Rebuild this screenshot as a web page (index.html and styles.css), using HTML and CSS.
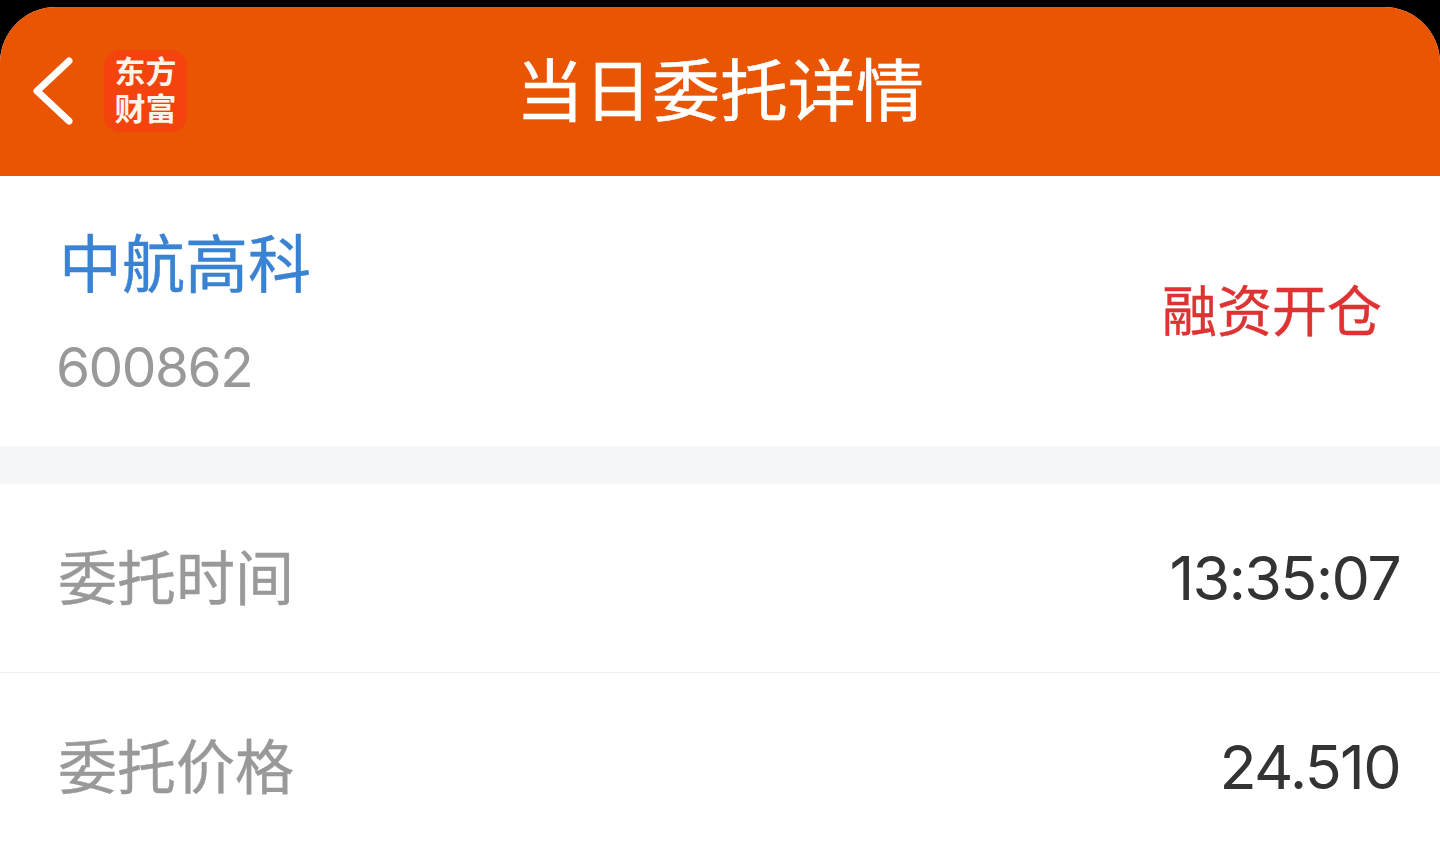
FILE: index.html
```html
<!DOCTYPE html>
<html lang="zh-CN">
<head>
  <meta charset="UTF-8" />
  <meta name="viewport" content="width=device-width, initial-scale=1.0" />
  <title>当日委托详情</title>
  <link rel="stylesheet" href="styles.css">
</head>
<body>
  <div class="screen">
    <div class="header">
      <div class="header-left">
        <svg class="back-icon" width="42" height="70" viewBox="0 0 42 70">
          <path d="M37 5 L5 35 L37 65" fill="none" stroke="#fff" stroke-width="7" stroke-linecap="round" stroke-linejoin="round" />
        </svg>
        <div class="logo">
          <span class="logo-line">东方</span>
          <span class="logo-line">财富</span>
        </div>
      </div>
      <div class="title">当日委托详情</div>
    </div>

    <div class="stock">
      <div>
        <div class="stock-name">中航高科</div>
        <div class="stock-code">600862</div>
      </div>
      <div class="trade-type">融资开仓</div>
    </div>

    <div class="gap"></div>

    <div class="row">
      <span class="row-label">委托时间</span>
      <span class="row-value">13:35:07</span>
    </div>
    <div class="row">
      <span class="row-label">委托价格</span>
      <span class="row-value">24.510</span>
    </div>
  </div>
</body>
</html>
```

FILE: styles.css
```css
html, body {
  margin: 0;
  padding: 0;
  height: 858px;
  overflow: hidden;
  background: #000;
}
body {
  font-family: Inter, "Noto Sans CJK SC", sans-serif;
  color: #333;
}
.screen {
  margin-top: 7px;
  height: 851px;
  background: #fff;
  border-radius: 56px 56px 0 0;
  overflow: hidden;
}
.header {
  height: 169px;
  background: #ea5504;
  color: #fff;
  display: flex;
  align-items: center;
  justify-content: center;
  position: relative;
}
.header-left {
  position: absolute;
  left: 32px;
  top: 43px;
  display: flex;
  align-items: center;
  gap: 30px;
}
.logo {
  width: 83px;
  height: 82px;
  box-sizing: border-box;
  padding-bottom: 6px;
  background: #f4430c;
  border-radius: 16px;
  font-family: "Noto Sans CJK SC", serif;
  font-size: 31px;
  line-height: 37px;
  font-weight: 700;
  text-align: center;
  display: flex;
  flex-direction: column;
  justify-content: center;
}
.logo-line {
  display: block;
  color: #fff3ea;
}
.title {
  font-family: "Noto Sans CJK SC", sans-serif;
  font-size: 68px;
  line-height: 90px;
  margin-top: -10px;
  -webkit-text-stroke: 0.5px #fff;
}
.stock {
  height: 270px;
  padding: 0 58px;
  display: flex;
  align-items: center;
  justify-content: space-between;
}
.stock-name {
  font-family: "Noto Sans CJK SC", sans-serif;
  font-size: 63px;
  color: #3a82d2;
  line-height: 80px;
  margin-left: 1px;
  -webkit-text-stroke: 0.4px #3a82d2;
}
.stock-code {
  font-size: 55px;
  letter-spacing: -1.5px;
  color: #999;
  line-height: 64px;
  margin: 35px 0 3px -2px;
}
.trade-type {
  font-family: "Noto Sans CJK SC", sans-serif;
  font-size: 55px;
  line-height: 70px;
  color: #dd3333;
  margin-top: -8px;
  -webkit-text-stroke: 0.4px #dd3333;
}
.gap {
  height: 38px;
  background: #f5f7f9;
}
.row {
  height: 188px;
  border-bottom: 1px solid #eee;
  padding: 0 40px 0 58px;
  display: flex;
  align-items: center;
  justify-content: space-between;
}
.row-label {
  font-family: "Noto Sans CJK SC", sans-serif;
  font-size: 59px;
  line-height: 80px;
  color: #999;
  margin-top: -6px;
  -webkit-text-stroke: 0.4px #999;
}
.row-value {
  font-size: 61px;
  letter-spacing: -1.7px;
  color: #333;
}
```
